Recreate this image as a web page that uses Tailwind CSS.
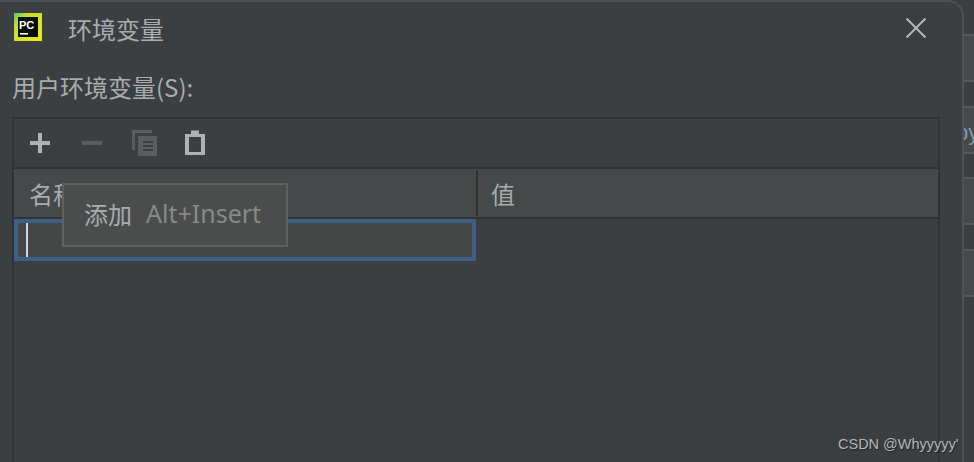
<!DOCTYPE html>
<html><head><meta charset="utf-8"><script src="https://cdn.jsdelivr.net/npm/@tailwindcss/browser@4"></script></head>
<body class="m-0 bg-[#3c3f41]">
<div class="relative flex w-[974px] h-[462px] overflow-hidden bg-[#3c3f41] font-['Noto_Sans_CJK_SC','Liberation_Sans',sans-serif] text-[#a9acad]">
  <div class="w-[964px] h-[462px] shrink-0 border-t-2 border-r-2 border-[#4f5254] rounded-tr-[16px] bg-[#3c3f41] flex flex-col">
    <div class="h-[44px] flex items-start">
      <svg class="ml-[14px] mt-[11px]" width="28" height="28" viewBox="0 0 28 28"><defs><linearGradient id="g" x1="0" y1="0" x2="1" y2="1"><stop offset="0" stop-color="#3fd06a"/><stop offset="0.25" stop-color="#c8dc30"/><stop offset="1" stop-color="#f0e81c"/></linearGradient></defs><rect width="28" height="28" fill="url(#g)"/><rect x="4" y="4" width="20" height="20" fill="#021008"/><text x="5" y="15.500" font-family="Liberation Sans" font-weight="700" font-size="11" fill="#fff">PC</text><rect x="6" y="20" width="8" height="1.600" fill="#fff"/></svg>
      <div class="ml-[26px] mt-[10px] text-[24px] leading-[34px] whitespace-nowrap">环境变量</div>
    </div>
    <div class="ml-[12px] mt-[24px] h-[33px] text-[24px] leading-[33px] whitespace-nowrap">用户环境变量(S):</div>
    <div class="mt-[14px] ml-[12px] w-[928px] flex-1 border-l-2 border-t-2 border-r-2 border-[#323232] flex flex-col">
      <div class="h-[48px] flex items-center shrink-0">
        <svg class="ml-[15px]" width="22" height="22" viewBox="0 0 22 22"><path d="M1 11h20M11 1v20" stroke="#afb1b3" stroke-width="4"/></svg>
        <svg class="ml-[30px]" width="22" height="22" viewBox="0 0 22 22"><path d="M1 11h20" stroke="#5a5d5e" stroke-width="4"/></svg>
        <svg class="ml-[29px]" width="26" height="26" viewBox="0 0 26 26"><path d="M1.500 20V1.500H20" fill="none" stroke="#5a5d5e" stroke-width="3"/><path d="M6 6h19v20H6z" fill="#5a5d5e"/><path d="M11 12h10M11 16h10M11 20h10" stroke="#3c3f41" stroke-width="2"/></svg>
        <svg class="ml-[27px]" width="20" height="26" viewBox="0 0 20 26"><path d="M0 4h20v21H0z" fill="#afb1b3"/><path d="M4 7h12v15H4z" fill="#3c3f41"/><path d="M6 0.500h8v5.500H6z" fill="#afb1b3"/></svg>
      </div>
      <div class="h-[52px] shrink-0 border-y-2 border-[#323232] bg-[#45494a] flex">
        <div class="w-[462px] flex items-center pl-[15px] pt-[2px] text-[24px]">名称</div>
        <div class="w-[2px] my-[1px] bg-[#323232]"></div>
        <div class="flex items-center pl-[13px] pt-[2px] text-[24px]">值</div>
      </div>
      <div class="w-[462px] h-[42px] border-[4px] border-[#3d6185] bg-[#454747] flex items-stretch">
        <div class="ml-[8px] w-[2px] bg-[#d4d6d7]"></div>
      </div>
    </div>
  </div>
  <div class="flex-1 flex flex-col bg-[#3c3f41]">
    <div class="h-[34px] shrink-0 bg-[#3c3f41]"></div>
    <div class="h-[48px] shrink-0 border-y-2 border-[#555758] bg-[#45494a]"></div>
    <div class="h-[24px] shrink-0 bg-[#3c3f41]"></div>
    <div class="h-[48px] shrink-0 border-y-2 border-[#555758] bg-[#45494a] overflow-hidden whitespace-nowrap -indent-[8px] text-[22px] leading-[50px] text-[#7d97ad] font-['Liberation_Sans']">py</div>
    <div class="h-[23px] shrink-0 bg-[#3c3f41]"></div>
    <div class="h-[48px] shrink-0 border-y-2 border-[#555758] bg-[#45494a]"></div>
    <div class="h-[24px] shrink-0 bg-[#3c3f41]"></div>
    <div class="h-[48px] shrink-0 border-y-2 border-[#555758] bg-[#45494a]"></div>
  </div>
  <div class="absolute left-[62px] top-[183px] w-[226px] h-[64px] border-2 border-[#5f6060] bg-[#4b4d4d] flex items-center pl-[20px] pb-[3px] whitespace-nowrap text-[24px]">
    <span class="text-[#a9acad]">添加</span><span class="ml-[14px] text-[#87898a] font-['Noto_Sans',sans-serif] text-[25px]">Alt+Insert</span>
  </div>
  <div class="absolute left-[838px] top-[434px] text-[14.5px] leading-[20px] text-[#b5b7b8] font-['Liberation_Sans'] whitespace-nowrap [text-shadow:1px_1px_1px_#222]">CSDN @Whyyyyy'</div>
  <svg class="absolute left-[905px] top-[17px]" width="22" height="22" viewBox="0 0 22 22"><path d="M1.500 1.500l19 19M20.500 1.500l-19 19" stroke="#b4b6b7" stroke-width="2"/></svg>
</div>
</body></html>
